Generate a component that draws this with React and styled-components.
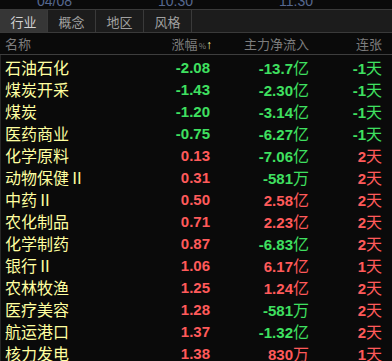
import styled, { createGlobalStyle } from 'styled-components';

const GlobalStyle = createGlobalStyle`
  html, body {
    margin: 0;
    padding: 0;
    background: #0a0a0a;
  }
  body {
    width: 392px;
    height: 361px;
    overflow: hidden;
  }
`;

const CJK = `"Noto Sans CJK SC", "Noto Sans", sans-serif`;
const NUM = `"Liberation Sans", Arial, sans-serif`;

const COLORS = {
  up: '#ff5a5a',
  down: '#3fe060',
  name: '#ffffa0',
  head: '#7d7d7d',
};

const Panel = styled.div`
  width: 392px;
  height: 361px;
  background: #0a0a0a;
  overflow: hidden;
`;

const TimeStrip = styled.div`
  display: flex;
  align-items: flex-end;
  height: 9px;
  overflow: hidden;
  padding-left: 37px;
`;

const TimeLabel = styled.span`
  width: 121px;
  flex: none;
  font-family: ${NUM};
  font-size: 14px;
  line-height: 14px;
  padding-bottom: 1px;
  color: #56688f;
`;

const TabBar = styled.div`
  display: flex;
  height: 22px;
  background: #1c1c1c;
  border-top: 1px solid #3a3a3a;
  border-bottom: 1px solid #3a3a3a;
`;

const Tab = styled.div`
  width: 47px;
  flex: none;
  display: flex;
  align-items: center;
  justify-content: center;
  border-right: 1px solid #3a3a3a;
  background: ${p => (p.$active ? '#363636' : '#1c1c1c')};
  color: ${p => (p.$active ? '#d2d2d2' : '#a0a0a0')};
  font-family: ${CJK};
  font-size: 13px;
`;

const Grid = styled.div`
  display: grid;
  grid-template-columns: 135px 70px 99px 73px;
  padding: 0 10px 0 5px;
  align-items: center;
`;

const HeaderRow = styled(Grid)`
  height: 21px;
  border-bottom: 1px solid #3e3e3e;
  font-family: ${CJK};
  font-size: 13px;
  color: ${COLORS.head};
`;

const HeadCell = styled.div`
  text-align: ${p => (p.$left ? 'left' : 'right')};
  white-space: nowrap;
`;

const SortMark = styled.span`
  font-size: 8px;
  margin-left: 1px;
`;

const Arrow = styled.span`
  color: #ffffa0;
  font-family: ${NUM};
  font-size: 12px;
  margin-right: -2px;
`;

const List = styled.div`
  border-left: 1px solid #262626;
`;

const Row = styled(Grid)`
  height: 22px;
  padding-left: 4px;
`;

const Name = styled.div`
  font-family: ${CJK};
  font-size: 16px;
  color: ${COLORS.name};
  white-space: nowrap;
`;

const Value = styled.div`
  text-align: right;
  white-space: nowrap;
  color: ${p => (p.$down ? COLORS.down : COLORS.up)};
  font-family: ${NUM};
  font-weight: bold;
  font-size: 15px;
`;

const Unit = styled.span`
  font-family: ${CJK};
  font-weight: normal;
  font-size: 16px;
`;

const rows = [
  ['石油石化', '-2.08', '-13.7', '亿', '-1'],
  ['煤炭开采', '-1.43', '-2.30', '亿', '-1'],
  ['煤炭', '-1.20', '-3.14', '亿', '-1'],
  ['医药商业', '-0.75', '-6.27', '亿', '-1'],
  ['化学原料', '0.13', '-7.06', '亿', '2'],
  ['动物保健Ⅱ', '0.31', '-581', '万', '2'],
  ['中药Ⅱ', '0.50', '2.58', '亿', '2'],
  ['农化制品', '0.71', '2.23', '亿', '2'],
  ['化学制药', '0.87', '-6.83', '亿', '2'],
  ['银行Ⅱ', '1.06', '6.17', '亿', '1'],
  ['农林牧渔', '1.25', '1.24', '亿', '2'],
  ['医疗美容', '1.28', '-581', '万', '2'],
  ['航运港口', '1.37', '-1.32', '亿', '2'],
  ['核力发电', '1.38', '830', '万', '1'],
];

const tabs = ['行业', '概念', '地区', '风格'];

export default function App() {
  return (
    <Panel>
      <GlobalStyle />
      <TimeStrip>
        <TimeLabel>04/08</TimeLabel>
        <TimeLabel>10:30</TimeLabel>
        <TimeLabel>11:30</TimeLabel>
      </TimeStrip>
      <TabBar>
        {tabs.map((t, i) => (
          <Tab key={t} $active={i === 0}>{t}</Tab>
        ))}
      </TabBar>
      <HeaderRow>
        <HeadCell $left>名称</HeadCell>
        <HeadCell>
          涨幅<SortMark>%</SortMark><Arrow>↑</Arrow>
        </HeadCell>
        <HeadCell>主力净流入</HeadCell>
        <HeadCell>连张</HeadCell>
      </HeaderRow>
      <List>
        {rows.map(([name, pct, flow, unit, days]) => (
          <Row key={name}>
            <Name>{name}</Name>
            <Value $down={pct.startsWith('-')}>{pct}</Value>
            <Value $down={flow.startsWith('-')}>
              {flow}<Unit>{unit}</Unit>
            </Value>
            <Value $down={days.startsWith('-')}>
              {days}<Unit>天</Unit>
            </Value>
          </Row>
        ))}
      </List>
    </Panel>
  );
}
